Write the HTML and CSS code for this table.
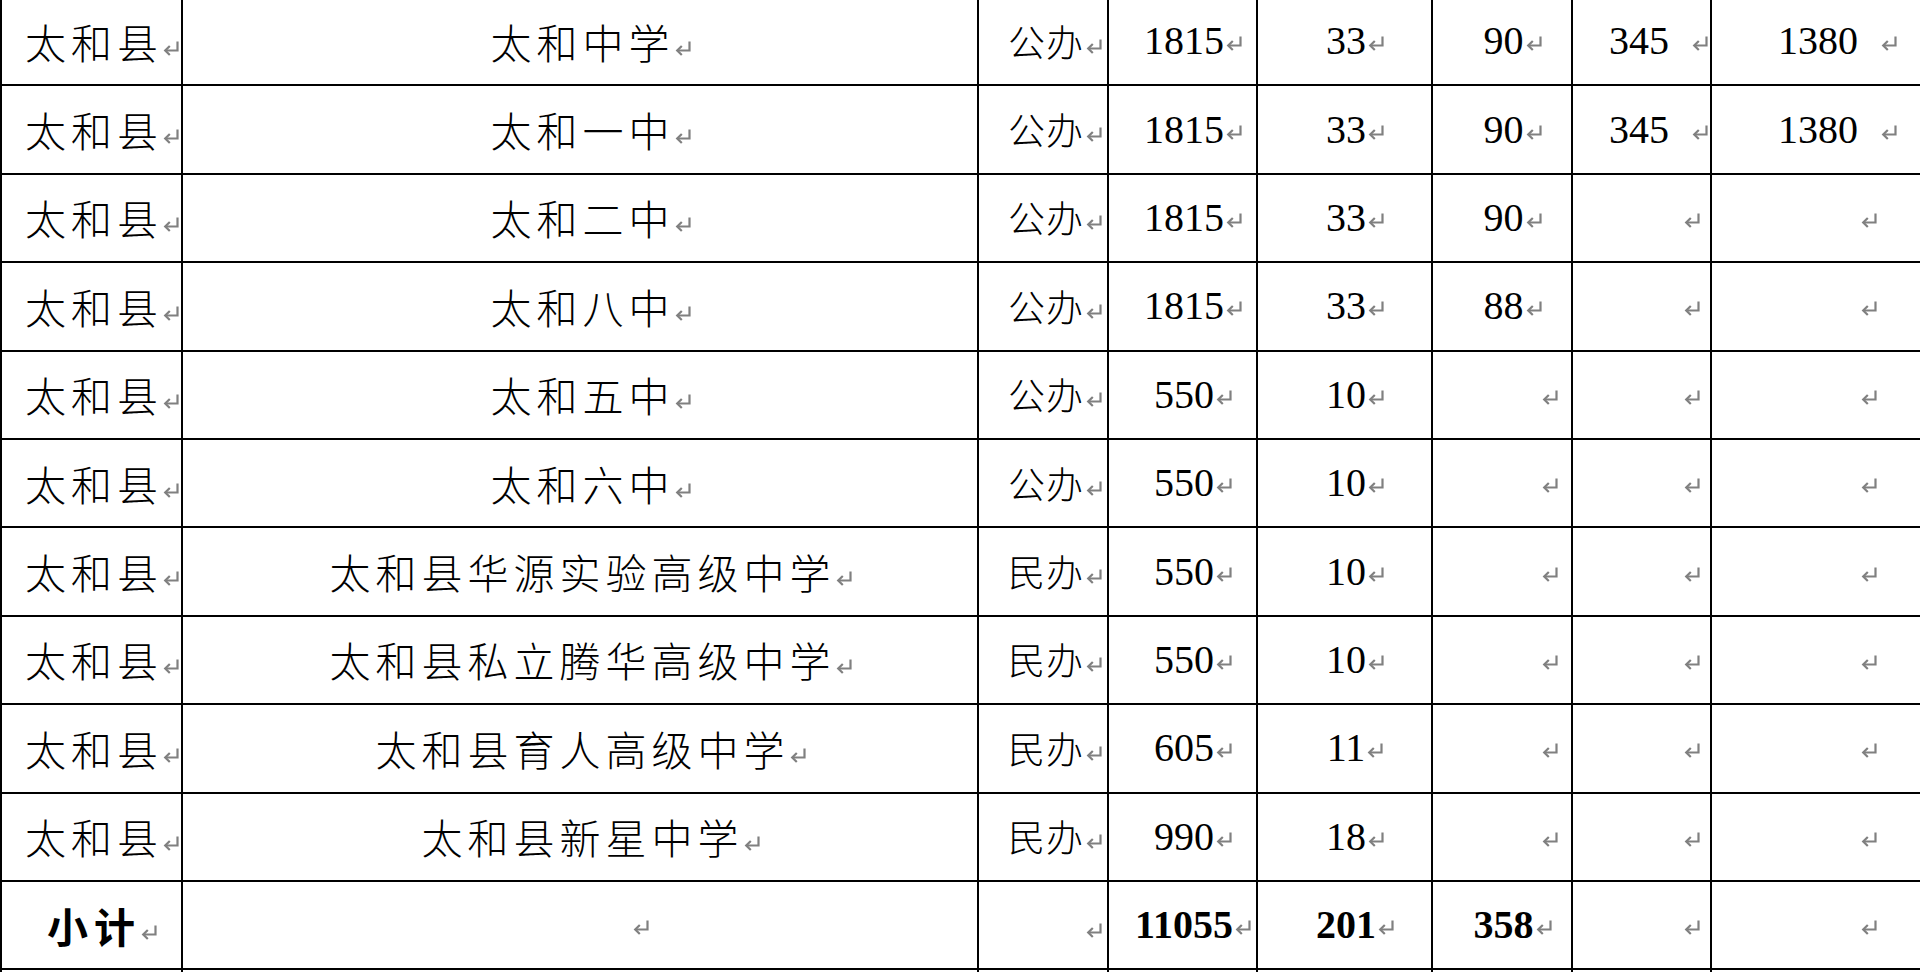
FILE: index.html
```html
<!DOCTYPE html>
<html lang="zh-CN">
<head>
<meta charset="utf-8">
<title>太和县学校统计</title>
<link rel="stylesheet" href="styles.css">
</head>
<body>
<svg class="defs" width="0" height="0" aria-hidden="true">
  <symbol id="pm" viewBox="0 0 17 15">
    <path d="M14.5 0.5 V9.5 H2.2" fill="none" stroke="#808080" stroke-width="2.2"/>
    <path d="M6.8 5 L2.2 9.5 L6.8 14" fill="none" stroke="#808080" stroke-width="2.2"/>
  </symbol>
</svg>
<table class="sheet">
  <colgroup>
    <col class="w1"><col class="w2"><col class="w3"><col class="w4"><col class="w5"><col class="w6"><col class="w7"><col class="w8">
  </colgroup>
  <tbody>
    <tr>
      <td class="c1">太和县<svg class="pm"><use href="#pm"/></svg></td>
      <td class="c2">太和中学<svg class="pm"><use href="#pm"/></svg></td>
      <td class="c3">公办<svg class="pm"><use href="#pm"/></svg></td>
      <td class="c4">1815<svg class="pm"><use href="#pm"/></svg></td>
      <td class="c5">33<svg class="pm"><use href="#pm"/></svg></td>
      <td class="c6">90<svg class="pm"><use href="#pm"/></svg></td>
      <td class="c7">345<svg class="pm sp"><use href="#pm"/></svg></td>
      <td class="c8">1380<svg class="pm sp"><use href="#pm"/></svg></td>
    </tr>
    <tr>
      <td class="c1">太和县<svg class="pm"><use href="#pm"/></svg></td>
      <td class="c2">太和一中<svg class="pm"><use href="#pm"/></svg></td>
      <td class="c3">公办<svg class="pm"><use href="#pm"/></svg></td>
      <td class="c4">1815<svg class="pm"><use href="#pm"/></svg></td>
      <td class="c5">33<svg class="pm"><use href="#pm"/></svg></td>
      <td class="c6">90<svg class="pm"><use href="#pm"/></svg></td>
      <td class="c7">345<svg class="pm sp"><use href="#pm"/></svg></td>
      <td class="c8">1380<svg class="pm sp"><use href="#pm"/></svg></td>
    </tr>
    <tr>
      <td class="c1">太和县<svg class="pm"><use href="#pm"/></svg></td>
      <td class="c2">太和二中<svg class="pm"><use href="#pm"/></svg></td>
      <td class="c3">公办<svg class="pm"><use href="#pm"/></svg></td>
      <td class="c4">1815<svg class="pm"><use href="#pm"/></svg></td>
      <td class="c5">33<svg class="pm"><use href="#pm"/></svg></td>
      <td class="c6">90<svg class="pm"><use href="#pm"/></svg></td>
      <td class="e7"><svg class="pm"><use href="#pm"/></svg></td>
      <td class="e8"><svg class="pm"><use href="#pm"/></svg></td>
    </tr>
    <tr>
      <td class="c1">太和县<svg class="pm"><use href="#pm"/></svg></td>
      <td class="c2">太和八中<svg class="pm"><use href="#pm"/></svg></td>
      <td class="c3">公办<svg class="pm"><use href="#pm"/></svg></td>
      <td class="c4">1815<svg class="pm"><use href="#pm"/></svg></td>
      <td class="c5">33<svg class="pm"><use href="#pm"/></svg></td>
      <td class="c6">88<svg class="pm"><use href="#pm"/></svg></td>
      <td class="e7"><svg class="pm"><use href="#pm"/></svg></td>
      <td class="e8"><svg class="pm"><use href="#pm"/></svg></td>
    </tr>
    <tr>
      <td class="c1">太和县<svg class="pm"><use href="#pm"/></svg></td>
      <td class="c2">太和五中<svg class="pm"><use href="#pm"/></svg></td>
      <td class="c3">公办<svg class="pm"><use href="#pm"/></svg></td>
      <td class="c4">550<svg class="pm"><use href="#pm"/></svg></td>
      <td class="c5">10<svg class="pm"><use href="#pm"/></svg></td>
      <td class="e6"><svg class="pm"><use href="#pm"/></svg></td>
      <td class="e7"><svg class="pm"><use href="#pm"/></svg></td>
      <td class="e8"><svg class="pm"><use href="#pm"/></svg></td>
    </tr>
    <tr>
      <td class="c1">太和县<svg class="pm"><use href="#pm"/></svg></td>
      <td class="c2">太和六中<svg class="pm"><use href="#pm"/></svg></td>
      <td class="c3">公办<svg class="pm"><use href="#pm"/></svg></td>
      <td class="c4">550<svg class="pm"><use href="#pm"/></svg></td>
      <td class="c5">10<svg class="pm"><use href="#pm"/></svg></td>
      <td class="e6"><svg class="pm"><use href="#pm"/></svg></td>
      <td class="e7"><svg class="pm"><use href="#pm"/></svg></td>
      <td class="e8"><svg class="pm"><use href="#pm"/></svg></td>
    </tr>
    <tr>
      <td class="c1">太和县<svg class="pm"><use href="#pm"/></svg></td>
      <td class="c2">太和县华源实验高级中学<svg class="pm"><use href="#pm"/></svg></td>
      <td class="c3">民办<svg class="pm"><use href="#pm"/></svg></td>
      <td class="c4">550<svg class="pm"><use href="#pm"/></svg></td>
      <td class="c5">10<svg class="pm"><use href="#pm"/></svg></td>
      <td class="e6"><svg class="pm"><use href="#pm"/></svg></td>
      <td class="e7"><svg class="pm"><use href="#pm"/></svg></td>
      <td class="e8"><svg class="pm"><use href="#pm"/></svg></td>
    </tr>
    <tr>
      <td class="c1">太和县<svg class="pm"><use href="#pm"/></svg></td>
      <td class="c2">太和县私立腾华高级中学<svg class="pm"><use href="#pm"/></svg></td>
      <td class="c3">民办<svg class="pm"><use href="#pm"/></svg></td>
      <td class="c4">550<svg class="pm"><use href="#pm"/></svg></td>
      <td class="c5">10<svg class="pm"><use href="#pm"/></svg></td>
      <td class="e6"><svg class="pm"><use href="#pm"/></svg></td>
      <td class="e7"><svg class="pm"><use href="#pm"/></svg></td>
      <td class="e8"><svg class="pm"><use href="#pm"/></svg></td>
    </tr>
    <tr>
      <td class="c1">太和县<svg class="pm"><use href="#pm"/></svg></td>
      <td class="c2">太和县育人高级中学<svg class="pm"><use href="#pm"/></svg></td>
      <td class="c3">民办<svg class="pm"><use href="#pm"/></svg></td>
      <td class="c4">605<svg class="pm"><use href="#pm"/></svg></td>
      <td class="c5">11<svg class="pm"><use href="#pm"/></svg></td>
      <td class="e6"><svg class="pm"><use href="#pm"/></svg></td>
      <td class="e7"><svg class="pm"><use href="#pm"/></svg></td>
      <td class="e8"><svg class="pm"><use href="#pm"/></svg></td>
    </tr>
    <tr>
      <td class="c1">太和县<svg class="pm"><use href="#pm"/></svg></td>
      <td class="c2">太和县新星中学<svg class="pm"><use href="#pm"/></svg></td>
      <td class="c3">民办<svg class="pm"><use href="#pm"/></svg></td>
      <td class="c4">990<svg class="pm"><use href="#pm"/></svg></td>
      <td class="c5">18<svg class="pm"><use href="#pm"/></svg></td>
      <td class="e6"><svg class="pm"><use href="#pm"/></svg></td>
      <td class="e7"><svg class="pm"><use href="#pm"/></svg></td>
      <td class="e8"><svg class="pm"><use href="#pm"/></svg></td>
    </tr>
    <tr class="total">
      <td class="c1 sub">小计<svg class="pm"><use href="#pm"/></svg></td>
      <td class="e2"><svg class="pm"><use href="#pm"/></svg></td>
      <td class="c3"><svg class="pm"><use href="#pm"/></svg></td>
      <td class="c4">11055<svg class="pm"><use href="#pm"/></svg></td>
      <td class="c5">201<svg class="pm"><use href="#pm"/></svg></td>
      <td class="c6">358<svg class="pm"><use href="#pm"/></svg></td>
      <td class="e7"><svg class="pm"><use href="#pm"/></svg></td>
      <td class="e8"><svg class="pm"><use href="#pm"/></svg></td>
    </tr>
    <tr class="tail">
      <td></td><td></td><td></td><td></td><td></td><td></td><td></td><td></td>
    </tr>
  </tbody>
</table>
</body>
</html>
```
FILE: styles.css
```css
html, body {
  margin: 0;
  padding: 0;
  background: #ffffff;
  overflow: hidden;
  height: 100%;
}

.defs {
  position: absolute;
  width: 0;
  height: 0;
}

.sheet {
  border-collapse: collapse;
  table-layout: fixed;
  width: 2000px;
  margin-top: -4px;
  font-family: "Liberation Serif", "Noto Sans CJK SC", serif;
  font-size: 40px;
  color: #000000;
}

.w1 { width: 181px; }
.w2 { width: 796px; }
.w3 { width: 130px; }
.w4 { width: 149px; }
.w5 { width: 175px; }
.w6 { width: 140px; }
.w7 { width: 139px; }
.w8 { width: 290px; }

.sheet td {
  border: 2px solid #000000;
  height: 88.4px;
  padding: 0;
  vertical-align: middle;
  white-space: nowrap;
  line-height: 1;
  box-sizing: border-box;
}

.sheet .tail td {
  height: 20px;
}

.pm {
  display: inline-block;
  width: 17px;
  height: 15px;
  margin-left: 2px;
  vertical-align: 3px;
}

.pm.sp {
  margin-left: 23px;
}

.c1, .c2 {
  font-family: "Noto Sans CJK SC", sans-serif;
  font-weight: 300;
  font-size: 41px;
  letter-spacing: 5px;
  text-align: center;
  padding-left: 22px !important;
}

.c1 .pm, .c2 .pm {
  margin-left: 0;
}

.sub {
  font-weight: 700;
  letter-spacing: 6px;
}

.c3 {
  font-family: "Noto Sans CJK SC", sans-serif;
  font-weight: 300;
  font-size: 37px;
  letter-spacing: 1px;
  text-align: right;
  padding-right: 4px !important;
}

.c4, .c5, .c6 {
  text-align: center;
  padding-left: 22px !important;
}

.total .c4, .total .c5, .total .c6 {
  font-weight: 700;
}

.c7 {
  text-align: right;
  padding-right: 1px !important;
}

.c8 {
  text-align: left;
  padding-left: 66px !important;
}

.e2 {
  text-align: left;
  padding-left: 448px !important;
}

.e6 {
  text-align: right;
  padding-right: 12px !important;
}

.e7 {
  text-align: right;
  padding-right: 9px !important;
}

.e8 {
  text-align: left;
  padding-left: 147px !important;
}
```
